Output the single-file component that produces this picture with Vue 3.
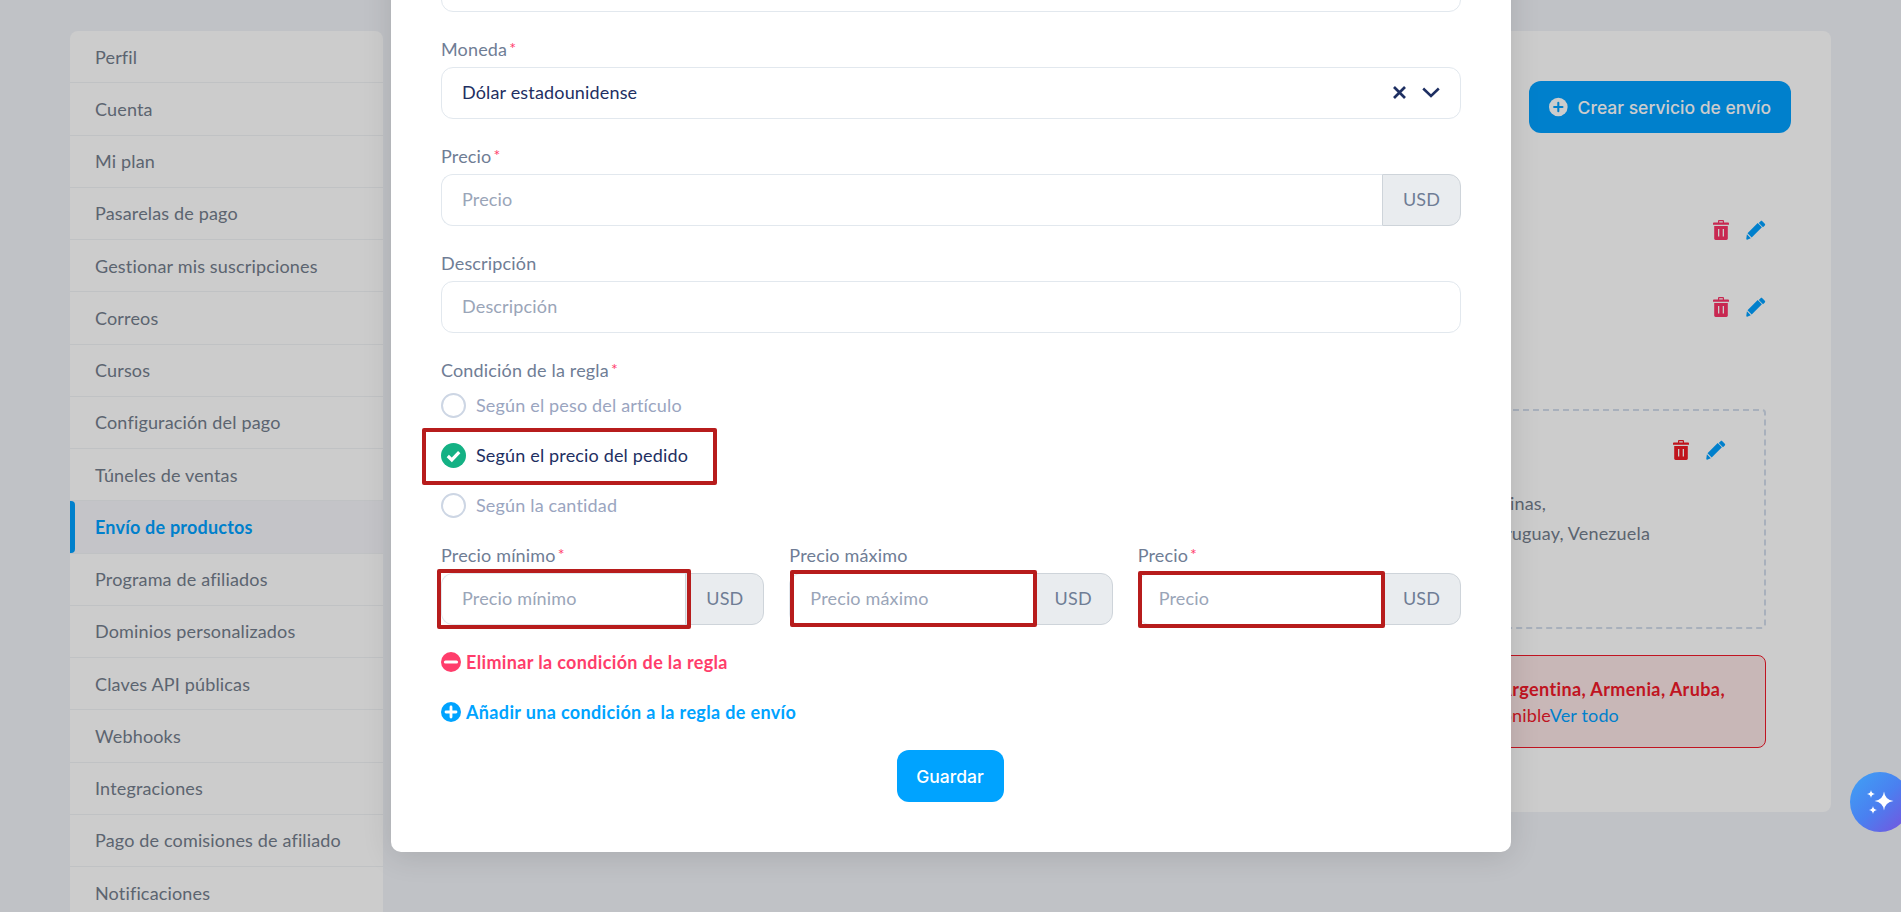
<template>
  <div class="page">
    <div class="layout">
      <!-- Settings menu -->
      <nav class="sidebar">
        <a
          v-for="item in menu"
          :key="item"
          class="menu-item"
          :class="{ active: item === activeItem }"
        >{{ item }}</a>
      </nav>

      <!-- Shipping services, mostly behind the modal -->
      <main class="panel">
        <div class="panel-head">
          <button class="create-btn">
            <svg width="20" height="20" viewBox="0 0 20 20">
              <circle cx="10" cy="10" r="10" fill="#fff" />
              <path d="M10 5.5v9M5.5 10h9" stroke="#00a0ff" stroke-width="2.2" stroke-linecap="round" />
            </svg>
            Crear servicio de envío
          </button>
        </div>

        <div class="rate-row first">
          <svg class="trash" width="16" height="20" viewBox="0 0 16 20"><path :d="trashPath" fill-rule="evenodd" /></svg>
          <svg class="pencil" width="20" height="20" viewBox="0 0 20 20"><path :d="pencilPath" /></svg>
        </div>
        <div class="rate-row second">
          <svg class="trash" width="16" height="20" viewBox="0 0 16 20"><path :d="trashPath" fill-rule="evenodd" /></svg>
          <svg class="pencil" width="20" height="20" viewBox="0 0 20 20"><path :d="pencilPath" /></svg>
        </div>

        <section class="zone">
          <div class="zone-actions">
            <svg class="trash dark" width="16" height="20" viewBox="0 0 16 20"><path :d="trashPath" fill-rule="evenodd" /></svg>
            <svg class="pencil" width="20" height="20" viewBox="0 0 20 20"><path :d="pencilPath" /></svg>
          </div>
          <p class="zone-line one">Bolivia, Brasil, Chile, Colombia, Ecuador, Filipinas,</p>
          <p class="zone-line two">México, Panamá, Paraguay, Perú, Uruguay, Venezuela</p>
        </section>

        <section class="alert">
          <p class="alert-line one">No disponible en: Argentina, Armenia, Aruba,</p>
          <p class="alert-line two">El servicio de envío no está disponible<a class="see-all">Ver todo</a></p>
        </section>
      </main>
    </div>

    <div class="overlay"></div>

    <!-- Shipping rule modal, scrolled so its top is cut off -->
    <div class="modal">
      <div class="field">
        <div class="input"></div>
      </div>

      <div class="field">
        <label class="label">Moneda<span class="req">*</span></label>
        <div class="input select">
          <span class="value">Dólar estadounidense</span>
          <svg class="clear" width="13" height="13" viewBox="0 0 13 13">
            <path d="M1 1l11 11M12 1L1 12" stroke="#1e2f62" stroke-width="2.7" fill="none" />
          </svg>
          <svg class="chevron" width="18" height="11" viewBox="0 0 18 11">
            <path d="M1.2 1.5L9 9l7.8-7.5" stroke="#1e2f62" stroke-width="2.5" fill="none" />
          </svg>
        </div>
      </div>

      <div class="field">
        <label class="label">Precio<span class="req">*</span></label>
        <div class="group">
          <div class="input grouped placeholder">Precio</div>
          <div class="addon">USD</div>
        </div>
      </div>

      <div class="field">
        <label class="label">Descripción</label>
        <div class="input placeholder">Descripción</div>
      </div>

      <label class="label">Condición de la regla<span class="req">*</span></label>
      <div class="radios">
        <div
          v-for="opt in conditions"
          :key="opt.label"
          class="radio-row"
          :class="{ checked: opt.checked }"
        >
          <svg v-if="opt.checked" width="25" height="25" viewBox="0 0 25 25">
            <circle cx="12.5" cy="12.5" r="12.5" fill="#14b184" />
            <path d="M6.8 13l4 3.9 7.4-7.8" stroke="#fff" stroke-width="3.2" fill="none" />
          </svg>
          <span v-else class="radio"></span>
          {{ opt.label }}
          <span v-if="opt.checked" class="mark mark-radio"></span>
        </div>
      </div>

      <div class="price-row">
        <div v-for="col in priceCols" :key="col.label" class="price-col">
          <label class="label">{{ col.label }}<span v-if="col.required" class="req">*</span></label>
          <div class="group">
            <div class="input grouped placeholder">{{ col.label }}</div>
            <div class="addon">USD</div>
            <span class="mark" :class="col.mark"></span>
          </div>
        </div>
      </div>

      <a class="rule-link remove">
        <svg width="20" height="20" viewBox="0 0 20 20">
          <circle cx="10" cy="10" r="10" fill="#ff3d6b" />
          <path d="M4.5 10h11" stroke="#fff" stroke-width="3.2" stroke-linecap="round" />
        </svg>
        Eliminar la condición de la regla
      </a>
      <a class="rule-link add">
        <svg width="20" height="20" viewBox="0 0 20 20">
          <circle cx="10" cy="10" r="10" fill="#00a3ff" />
          <path d="M10 5v10M5 10h10" stroke="#fff" stroke-width="2.8" stroke-linecap="round" />
        </svg>
        Añadir una condición a la regla de envío
      </a>

      <div class="actions">
        <button class="save-btn">Guardar</button>
      </div>
    </div>

    <!-- Floating assistant -->
    <button class="assistant">
      <svg width="60" height="60" viewBox="0 0 60 60" fill="#fff">
        <path d="M34 19.5Q35 28 43.5 29 35 30 34 38.5 33 30 24.5 29 33 28 34 19.5z" />
        <path d="M21 18Q21.4 21.6 25 22 21.4 22.4 21 26 20.6 22.4 17 22 20.6 21.6 21 18z" />
        <path d="M23 34Q23.4 37.6 27 38 23.4 38.4 23 42 22.6 38.4 19 38 22.6 37.6 23 34z" />
      </svg>
    </button>
  </div>
</template>

<script setup>
const menu = [
  'Perfil',
  'Cuenta',
  'Mi plan',
  'Pasarelas de pago',
  'Gestionar mis suscripciones',
  'Correos',
  'Cursos',
  'Configuración del pago',
  'Túneles de ventas',
  'Envío de productos',
  'Programa de afiliados',
  'Dominios personalizados',
  'Claves API públicas',
  'Webhooks',
  'Integraciones',
  'Pago de comisiones de afiliado',
  'Notificaciones'
]
const activeItem = 'Envío de productos'

const conditions = [
  { label: 'Según el peso del artículo', checked: false },
  { label: 'Según el precio del pedido', checked: true },
  { label: 'Según la cantidad', checked: false }
]

const priceCols = [
  { label: 'Precio mínimo', required: true, mark: 'mark-min' },
  { label: 'Precio máximo', required: false, mark: 'mark-max' },
  { label: 'Precio', required: true, mark: 'mark-price' }
]

const trashPath = 'M5 2.6V1.2C5 .5 5.5 0 6.2 0h3.6C10.5 0 11 .5 11 1.2v1.4h4.2c.4 0 .8.4.8.8v1.4H0V3.4c0-.4.4-.8.8-.8zM6.2 2.6h3.6V1.2H6.2zM1.2 6h13.6v12.6c0 .8-.6 1.4-1.4 1.4H2.6c-.8 0-1.4-.6-1.4-1.4zM5 9v7.5h1.3V9zm4.7 0v7.5H11V9z'
const pencilPath = 'M14.6 1.2c.5-.5 1.2-.5 1.7 0l2.5 2.5c.5.5.5 1.2 0 1.7l-1.8 1.8-4.2-4.2zM11.7 3.1l4.2 4.2L5.7 17.5l-4.2-4.2zM.9 14.3l3.9 3.9-3.6 1.5c-.6.2-1.1-.3-.9-.9z'
</script>

<style>
html,
body {
  margin: 0;
  height: 100%;
  overflow: hidden;
}
</style>

<style scoped>
.page {
  position: relative;
  height: 100vh;
  overflow: hidden;
  background: #f1f3f8;
  font-family: Lato, "Open Sans", sans-serif;
  font-size: 18px;
  letter-spacing: 0.16px;
  color: #737d8c;
}

.layout {
  display: flex;
  gap: 16px;
  padding: 31px 70px 0;
}

.sidebar {
  flex: 0 0 313px;
  background: #fff;
  border-radius: 8px 8px 0 0;
}

.menu-item {
  position: relative;
  display: flex;
  align-items: center;
  box-sizing: border-box;
  height: 52.25px;
  padding-left: 25px;
  border-bottom: 1px solid #f1f3f6;
  color: #737d8c;
}

.menu-item.active {
  background: #f5f6fa;
  color: #00a0ff;
  font-weight: 700;
  letter-spacing: 0.2px;
}

.menu-item.active::before {
  content: "";
  position: absolute;
  top: 0;
  bottom: 0;
  left: 0;
  width: 5px;
  border-radius: 0 4px 4px 0;
  background: #00a0ff;
}

.panel {
  flex: 1;
  box-sizing: border-box;
  height: 781px;
  padding: 50px 40px 0 0;
  background: #fff;
  border-radius: 8px;
}

.panel-head {
  display: flex;
  justify-content: flex-end;
}

.create-btn {
  display: flex;
  align-items: center;
  gap: 10px;
  height: 52px;
  width: 262px;
  padding: 0 20px;
  border: none;
  border-radius: 12px;
  background: #00a0ff;
  color: #fff;
  font-family: Inter, sans-serif;
  font-size: 17.5px;
  font-weight: 500;
  letter-spacing: 0;
  white-space: nowrap;
}

.rate-row {
  display: flex;
  justify-content: flex-end;
  gap: 17px;
  padding-right: 25px;
}

.rate-row.first {
  margin-top: 87px;
}

.rate-row.second {
  margin-top: 57px;
}

.trash {
  fill: #fa3366;
}

.trash.dark {
  fill: #f11923;
}

.pencil {
  fill: #00a0ff;
}

.zone {
  box-sizing: border-box;
  height: 220px;
  margin: 92px 25px 0 0;
  padding: 29px 38px 0 0;
  border: 2px dashed #d3ddeb;
  border-radius: 4px;
}

.zone-actions {
  display: flex;
  justify-content: flex-end;
  gap: 17px;
}

.zone-line,
.alert-line {
  margin: 0;
  text-align: right;
  white-space: nowrap;
}

.zone-line {
  line-height: 30px;
}

.zone-line.one {
  margin-top: 28px;
  padding-right: 180px;
}

.zone-line.two {
  padding-right: 76px;
}

.alert {
  box-sizing: border-box;
  height: 93px;
  margin: 26px 25px 0 0;
  padding-top: 20px;
  border: 1px solid #f1192a;
  border-radius: 8px;
  background: #fae5e5;
  color: #f1192a;
}

.alert-line {
  line-height: 26px;
}

.alert-line.one {
  padding-right: 40px;
  font-weight: 700;
  letter-spacing: 0.4px;
}

.alert-line.two {
  padding-right: 146px;
}

.see-all {
  color: #00a0ff;
}

.overlay {
  position: absolute;
  inset: 0;
  background: rgba(0, 0, 0, 0.2);
}

.modal {
  position: absolute;
  top: -40px;
  left: 391px;
  box-sizing: border-box;
  width: 1120px;
  padding: 0 50px 50px;
  background: #fff;
  border-radius: 0 0 10px 10px;
  box-shadow: 0 4px 30px rgba(0, 0, 0, 0.12);
  color: #6f7d95;
}

.field {
  margin-bottom: 26px;
}

.label {
  display: block;
  height: 24px;
  margin-bottom: 5px;
  line-height: 22px;
}

.req {
  margin-left: 2px;
  color: #ff3d6b;
  font-size: 16px;
  line-height: 0;
  vertical-align: 2px;
}

.input {
  display: flex;
  align-items: center;
  box-sizing: border-box;
  height: 52px;
  padding: 0 20px 2px;
  border: 1px solid #e2e8ee;
  border-radius: 12px;
  background: #fff;
}

.select {
  color: #1e2f62;
}

.value {
  flex: 1;
}

.clear {
  margin-right: 16px;
}

.placeholder {
  color: #9aa5b8;
}

.group {
  position: relative;
  display: flex;
}

.grouped {
  flex: 1;
  min-width: 0;
  border-right: none;
  border-radius: 12px 0 0 12px;
}

.addon {
  display: flex;
  align-items: center;
  justify-content: center;
  box-sizing: border-box;
  flex: 0 0 79px;
  height: 52px;
  padding-bottom: 2px;
  border: 1px solid #ced4da;
  border-radius: 0 12px 12px 0;
  background: #e9ecef;
}

.radios {
  display: flex;
  flex-direction: column;
  gap: 16px;
  margin-bottom: 22px;
}

.radio-row {
  position: relative;
  display: flex;
  align-items: center;
  gap: 10px;
  height: 34px;
  color: #9aa5c0;
}

.radio-row.checked {
  color: #1e2f62;
}

.radio {
  box-sizing: border-box;
  width: 25px;
  height: 25px;
  border: 2px solid #cdd6e4;
  border-radius: 50%;
}

.mark {
  position: absolute;
  box-sizing: border-box;
  border: 4px solid #b71c1c;
  border-radius: 2px;
}

.mark-radio {
  top: -10px;
  left: -19px;
  width: 295px;
  height: 57px;
}

.mark-min {
  top: -4px;
  left: -4px;
  width: 254px;
  height: 60px;
}

.mark-max {
  top: -3px;
  left: 1px;
  width: 247px;
  height: 57px;
}

.mark-price {
  top: -2px;
  left: 0;
  width: 247px;
  height: 57px;
}

.price-row {
  display: grid;
  grid-template-columns: repeat(3, 1fr);
  gap: 25px;
}

.rule-link {
  display: flex;
  align-items: center;
  gap: 5px;
  height: 20px;
  font-weight: 700;
  letter-spacing: 0.35px;
}

.rule-link.remove {
  margin-top: 27px;
  color: #ff3d6b;
}

.rule-link.add {
  margin-top: 30px;
  color: #00a3ff;
}

.actions {
  display: flex;
  justify-content: center;
  margin-top: 28px;
  padding-right: 2px;
}

.save-btn {
  width: 107px;
  height: 52px;
  border: none;
  border-radius: 12px;
  background: #00a3ff;
  color: #fff;
  font-family: Inter, sans-serif;
  font-size: 17.5px;
  font-weight: 500;
  letter-spacing: 0;
}

.assistant {
  position: absolute;
  right: -9px;
  top: 772px;
  width: 60px;
  height: 60px;
  padding: 0;
  border: none;
  border-radius: 50%;
  background: linear-gradient(135deg, #3fa3f5 0%, #4a80f0 50%, #7a4fdc 100%);
}
</style>
